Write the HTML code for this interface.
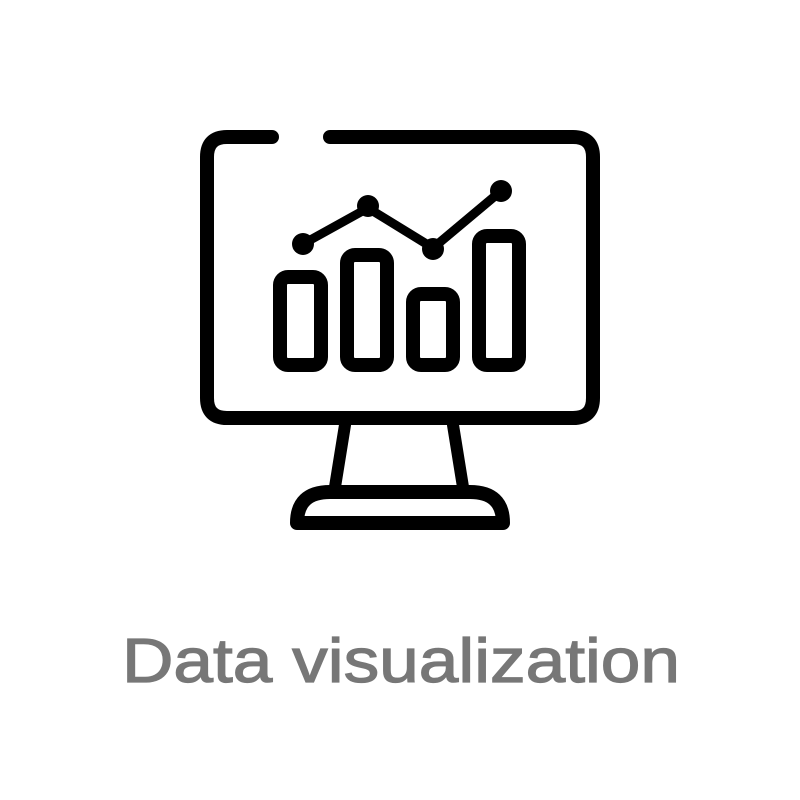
<!DOCTYPE html>
<html><head><style>html,body{margin:0;padding:0;background:#fff;width:800px;height:800px;overflow:hidden}</style></head>
<body>
<svg width="800" height="800" viewBox="0 0 800 800" xmlns="http://www.w3.org/2000/svg">
<g fill="none" stroke="#000" stroke-width="14" stroke-linecap="round" stroke-linejoin="round">
<path d="M272 137 H227 Q207 137 207 157 V398 Q207 418 227 418 H573 Q593 418 593 398 V157 Q593 137 573 137 H330"/>
<rect x="280" y="277" width="41" height="88" rx="8"/>
<rect x="347" y="255" width="40" height="110" rx="8"/>
<rect x="413" y="294" width="40" height="71" rx="8"/>
<rect x="479" y="236" width="40" height="129" rx="8"/>
<path d="M345 425 L335 487 M453 425 L463 487" stroke-width="12"/>
<path d="M297 523 Q297 492 330 492 H470 Q503 492 503 523 Z"/>
</g>
<path d="M303 244 L368 208 L433 248 L501 191" fill="none" stroke="#000" stroke-width="9" stroke-linejoin="round"/>
<g fill="#000"><circle cx="303" cy="244" r="11"/><circle cx="368" cy="206" r="11"/><circle cx="433" cy="249" r="11"/><circle cx="501" cy="191" r="11"/></g>
<text x="122" y="682" textLength="558" lengthAdjust="spacingAndGlyphs" font-family="Liberation Sans, sans-serif" font-size="62" fill="#777" stroke="#777" stroke-width="1.2">Data visualization</text>
</svg>
</body></html>
